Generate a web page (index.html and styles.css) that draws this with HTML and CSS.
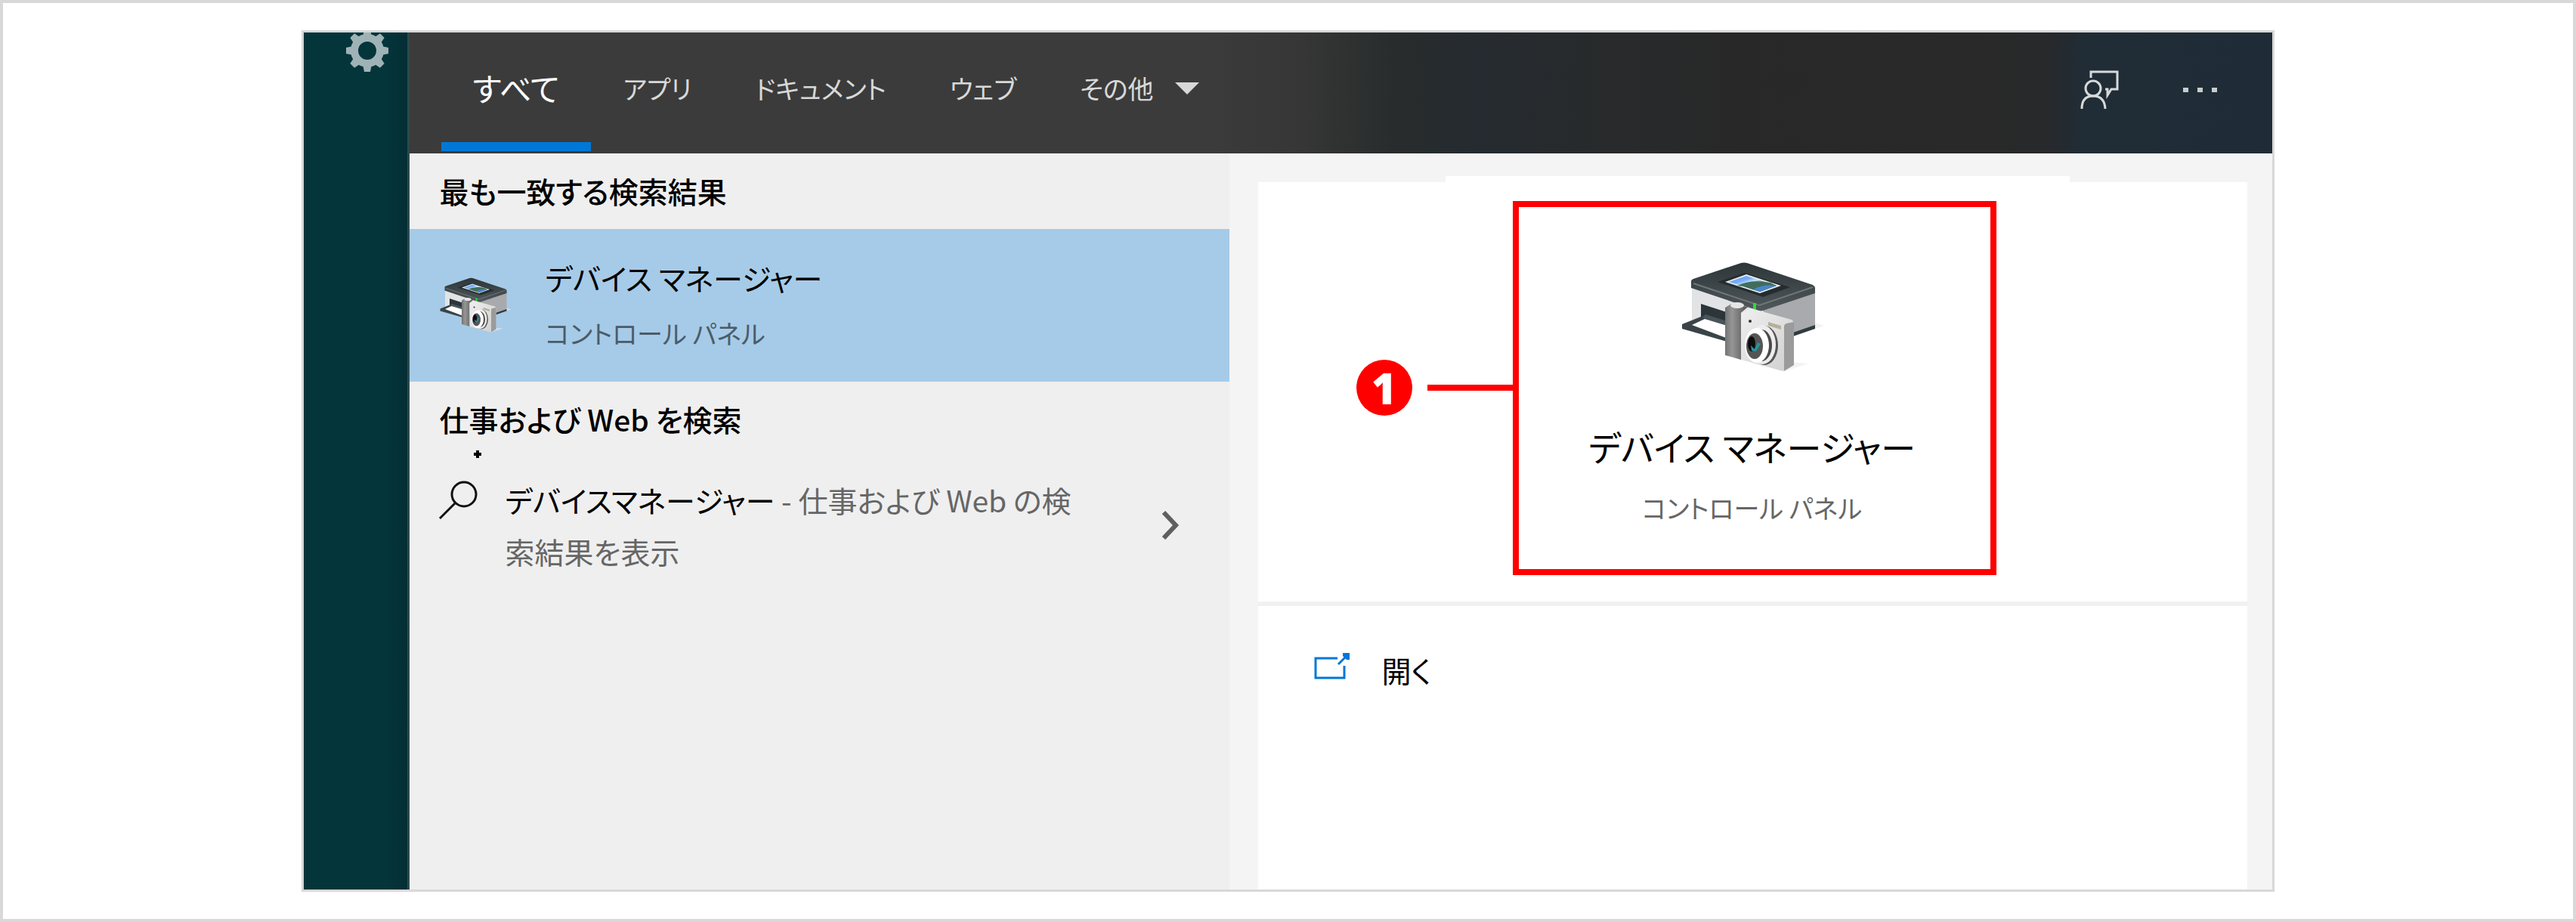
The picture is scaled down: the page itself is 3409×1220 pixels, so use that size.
FILE: index.html
```html
<!DOCTYPE html>
<html lang="ja">
<head>
<meta charset="utf-8">
<meta name="viewport" content="width=device-width, initial-scale=1">
<title>デバイス マネージャー - 検索</title>
<link rel="stylesheet" href="styles.css">
</head>
<body>
<svg class="defs" aria-hidden="true">
  <defs>
    <linearGradient id="lid" x1="0" y1="0" x2="0" y2="1"><stop offset="0" stop-color="#2c3538"/><stop offset="1" stop-color="#50585b"/></linearGradient>
    <linearGradient id="grip" x1="0" y1="0" x2="1" y2="0"><stop offset="0" stop-color="#737373"/><stop offset=".3" stop-color="#969696"/><stop offset=".7" stop-color="#707070"/><stop offset="1" stop-color="#4e4e4e"/></linearGradient>
    <linearGradient id="camera" x1="0" y1="0" x2="1" y2="1"><stop offset="0" stop-color="#efefef"/><stop offset="1" stop-color="#cfcfcf"/></linearGradient>
    <linearGradient id="photo" x1="0" y1="0" x2="1" y2="1"><stop offset="0" stop-color="#5b97f2"/><stop offset=".3" stop-color="#78aef8"/><stop offset=".42" stop-color="#c6e2f6"/><stop offset=".6" stop-color="#3d6b57"/><stop offset=".78" stop-color="#3b6f8c"/><stop offset="1" stop-color="#4c8ee0"/></linearGradient>
    <symbol id="printer" viewBox="24 27 188 148">
      <path d="M172 112L200 108L214 112L172 125Z M165 160L192 162L158 173Z" fill="#e9e9e9" opacity=".6"/>
      <path d="M38 56L130 88V135L38 104Z" fill="#e2e3e5"/>
      <path d="M130 88L201 64V113L150 131Z" fill="#a9aaad"/>
      <path d="M172 121L201 111V116L172 126Z" fill="#323c40"/>
      <path d="M50 83L90 96V116L50 102Z" fill="#2c3539"/>
      <path d="M56 97L88 107V116L50 102Z" fill="#48535a"/>
      <path d="M25 110L50 100L88 116V134L25 116Z" fill="#3a4448"/>
      <path d="M38 111L55 103L88 113V130Z" fill="#fff"/>
      <path d="M37 53Q37 51 40 50L103 29Q107 28 111 29L198 58Q201 60 201 62V69L132 92Q129 93 126 92L37 62Z" fill="url(#lid)"/>
      <path d="M40 56L127 85L198 61" fill="none" stroke="#6e7679" stroke-width="2"/>
      <path d="M72 54L108 42L168 61L132 74Z" fill="#252c2f"/>
      <path d="M82 54L110 44L156 59L128 69Z" fill="#e8edf0"/>
      <path d="M87 54L110 46L150 59L128 67Z" fill="url(#photo)"/>
      <path d="M98 59Q116 50 142 55L150 59L128 67L106 60Z" fill="#416d5c"/>
      <path d="M119 64Q132 57 150 59L128 67Z" fill="#4a86c8"/>
      <path d="M119 82H123V92H119Z" fill="#2bdc36"/>
      <path d="M82 88L90 83L112 87L103 95V157L82 151Z" fill="url(#grip)"/>
      <ellipse cx="98" cy="85" rx="9" ry="4" fill="#e6e6e6"/>
      <path d="M103 95L116 89L170 104Q173 106 173 109V164L158 172L103 157Z" fill="url(#camera)"/>
      <path d="M160 113Q160 110 163 109L173 107V164L160 172Z" fill="#9b9b9b"/>
      <path d="M139 107L156 112V117L139 112Z" fill="#b5b099"/>
      <circle cx="115" cy="106" r="2" fill="#333"/>
      <ellipse cx="134" cy="138" rx="18" ry="26" fill="#555"/>
      <ellipse cx="131" cy="137" rx="18" ry="26" fill="#ededed"/>
      <ellipse cx="130" cy="138" rx="14" ry="21" fill="#4a4a4a"/>
      <ellipse cx="124" cy="138" rx="16" ry="23" fill="#fff"/>
      <ellipse cx="121" cy="139" rx="11" ry="17" fill="#555"/>
      <ellipse cx="117" cy="136" rx="5" ry="10" fill="#0c0c0c"/>
      <path d="M116 138L121 143L125 134L129 136L123 146L117 145Z" fill="#24949f"/>
    </symbol>
  </defs>
</svg>
<div class="page">
  <div class="window">
    <aside class="rail">
      <button class="icon-button" aria-label="設定">
        <svg class="gear" viewBox="-28 -28 56 56" aria-hidden="true">
          <g fill="#9fb3b6">
            <path d="M-4-28H4L6-18H-6Z"/><path d="M-4-28H4L6-18H-6Z" transform="rotate(45)"/><path d="M-4-28H4L6-18H-6Z" transform="rotate(90)"/><path d="M-4-28H4L6-18H-6Z" transform="rotate(135)"/><path d="M-4-28H4L6-18H-6Z" transform="rotate(180)"/><path d="M-4-28H4L6-18H-6Z" transform="rotate(225)"/><path d="M-4-28H4L6-18H-6Z" transform="rotate(270)"/><path d="M-4-28H4L6-18H-6Z" transform="rotate(315)"/>
          </g>
          <circle r="17" fill="none" stroke="#9fb3b6" stroke-width="10"/>
        </svg>
      </button>
    </aside>
    <main class="search">
      <header class="bar">
        <nav class="tabs">
          <button class="tab tab-active">すべて</button>
          <button class="tab">アプリ</button>
          <button class="tab">ドキュメント</button>
          <button class="tab">ウェブ</button>
          <button class="tab">その他<svg class="caret" viewBox="0 0 32 16" aria-hidden="true"><path d="M0 0H32L16 16Z" fill="currentColor"/></svg></button>
        </nav>
        <div class="tools">
          <button class="icon-button" aria-label="フィードバック">
            <svg class="feedback" viewBox="0 0 52 52" fill="none" stroke="#d6d9da" stroke-width="3" aria-hidden="true">
              <path d="M14 10V2H49V25H41L36 33V25H33"/><ellipse cx="17" cy="24" rx="10" ry="10"/><path d="M2 51Q2 34 17 34T33 51"/>
            </svg>
          </button>
          <button class="icon-button" aria-label="オプション">
            <svg class="dots" viewBox="0 0 46 6" fill="#c8cccd" aria-hidden="true"><path d="M0 0H7V6H0ZM19 0H26V6H19ZM38 0H45V6H38Z"/></svg>
          </button>
        </div>
      </header>
      <div class="body">
        <section class="results">
          <h2 class="heading">最も一致する検索結果</h2>
          <a class="best" href="#device">
            <svg class="best-icon" aria-hidden="true"><use href="#printer"/></svg>
            <span class="best-text">
              <span class="best-title">デバイス マネージャー</span>
              <span class="best-sub">コントロール パネル</span>
            </span>
          </a>
          <h2 class="heading">仕事および Web を検索<svg class="mark" viewBox="0 0 10 10" aria-hidden="true"><path d="M5 0V10M0 5H10" stroke="#000" stroke-width="4"/></svg></h2>
          <a class="web" href="#web">
            <svg class="lens" viewBox="0 0 52 52" fill="none" stroke="#111" stroke-width="3" aria-hidden="true"><circle cx="34" cy="18" r="16"/><path d="M22 30L2 50"/></svg>
            <span class="web-text"><span class="query">デバイスマネージャー</span> - 仕事および Web の検索結果を表示</span>
            <svg class="chevron" viewBox="0 0 24 38" fill="none" stroke="#5f5f5f" stroke-width="6" aria-hidden="true"><path d="M3 2L19 19L3 36"/></svg>
          </a>
        </section>
        <section class="preview">
          <div class="hero">
            <div class="target" id="device">
              <span class="callout"><span class="badge">1</span><span class="leader"></span></span>
              <svg class="hero-icon" aria-hidden="true"><use href="#printer"/></svg>
              <h1 class="hero-title">デバイス マネージャー</h1>
              <p class="hero-sub">コントロール パネル</p>
            </div>
          </div>
          <div class="actions">
            <a class="action" href="#open">
              <svg class="open-icon" viewBox="0 0 48 36" fill="none" stroke="#0078d7" stroke-width="3" aria-hidden="true"><path d="M31 8H2V34H40V18M32 16L44 4"/><path d="M38 1H47V10H43L38 5Z" fill="#0078d7" stroke="none"/></svg>
              開く
            </a>
          </div>
        </section>
      </div>
    </main>
  </div>
</div>
</body>
</html>
```
FILE: styles.css
```css
* {
  box-sizing: border-box;
}

body {
  margin: 0;
  background: #fff;
  color: #000;
  font-family: "Noto Sans CJK JP", sans-serif;
  font-size: 39px;
  line-height: 60px;
  font-feature-settings: "palt";
}

h1, h2, p {
  margin: 0;
  font-weight: 400;
}

a {
  color: inherit;
  text-decoration: none;
}

button {
  border: 0;
  padding: 0;
  background: none;
  color: inherit;
  font: inherit;
  font-feature-settings: inherit;
}

svg {
  display: block;
  flex: none;
}

.defs {
  position: absolute;
  width: 0;
  height: 0;
}

.page {
  display: flex;
  justify-content: center;
  min-height: 100vh;
  padding: 36px 0;
  border: 4px solid #d8d8d8;
}

.window {
  display: flex;
  width: 76.8%;
  border: 3px solid #d8d8d8;
}

.rail {
  display: flex;
  flex: none;
  align-items: flex-start;
  justify-content: center;
  width: 140px;
  padding-left: 32px;
  overflow: hidden;
  border-right: 3px solid #2b494d;
  background: linear-gradient(90deg, #04353b 80%, #032e34);
}

.gear {
  width: 56px;
  height: 56px;
  margin-top: -4px;
}

.search {
  display: flex;
  flex: 1;
  flex-direction: column;
  min-width: 0;
}

.bar {
  display: flex;
  justify-content: space-between;
  height: 160px;
  padding: 0 72px 0 42px;
  background: linear-gradient(90deg, #3b3b3b 43%, #353635 48%, #282c2c 53%, #252b30 57%, #282a2b 65%, #282828 71%, #282928 85%, #27292c 88%, #202d36 90%, #1f2c38);
}

.tabs {
  display: flex;
  color: #d8d8d8;
}

.tab {
  display: flex;
  align-items: center;
  gap: 28px;
  padding: 0 42px 12px;
  font-size: 34px;
}

.tab-active {
  margin-bottom: 3px;
  padding-bottom: 0;
  border-bottom: 12px solid #0078d7;
  color: #fff;
  font-size: 42px;
}

.caret {
  width: 32px;
  height: 16px;
}

.tools {
  display: flex;
  align-items: center;
  gap: 84px;
  padding-bottom: 9px;
}

.feedback {
  width: 52px;
  height: 52px;
}

.dots {
  width: 46px;
  height: 6px;
}

.body {
  display: grid;
  flex: 1;
  grid-template-columns: 44% 1fr;
}

.results {
  background: #efefef;
}

.heading {
  position: relative;
  padding: 19px 40px 21px;
  font-size: 39px;
  font-weight: 500;
}

.mark {
  position: absolute;
  top: 91px;
  left: 85px;
  width: 10px;
  height: 10px;
}

.best {
  display: flex;
  align-items: center;
  gap: 46px;
  height: 202px;
  padding: 0 40px;
  background: #a6cbe8;
}

.best-icon {
  width: 94px;
  height: 78px;
}

.best-text {
  display: grid;
  gap: 14px;
}

.best-sub {
  color: #4a5c69;
  font-size: 34px;
}

.web {
  display: flex;
  align-items: center;
  padding: 22px 66px 18px 38px;
}

.lens {
  align-self: flex-start;
  width: 52px;
  height: 52px;
  margin-top: 9px;
}

.web-text {
  max-width: 770px;
  margin: 0 auto 0 37px;
  color: #666;
  line-height: 68px;
}

.query {
  color: #000;
}

.chevron {
  width: 24px;
  height: 38px;
}

.preview {
  display: flex;
  flex-direction: column;
  padding: 38px 33px 0 38px;
  background: #f4f4f4;
}

.hero {
  position: relative;
  display: flex;
  justify-content: center;
  padding: 25px 0 35px 4px;
  border-bottom: 6px solid #f1f1f1;
  background: #fff;
}

.hero::before {
  position: absolute;
  top: -8px;
  left: 19%;
  width: 63%;
  height: 8px;
  background: #fff;
  content: "";
}

.target {
  position: relative;
  display: flex;
  flex-direction: column;
  align-items: center;
  width: 640px;
  height: 495px;
  padding: 72px 6px 0 0;
  border: 8px solid #f00;
}

.callout {
  position: absolute;
  top: 202px;
  right: 100%;
  display: flex;
  align-items: center;
  gap: 20px;
}

.badge {
  width: 74px;
  height: 74px;
  border-radius: 50%;
  background: #f00;
  color: #fff;
  font: 800 56px/74px "Open Sans", sans-serif;
  text-align: center;
}

.leader {
  width: 121px;
  height: 8px;
  background: #f00;
}

.hero-icon {
  width: 188px;
  height: 148px;
}

.hero-title {
  margin-top: 56px;
  font-size: 46px;
  line-height: 80px;
}

.hero-sub {
  margin-top: 12px;
  color: #666;
  font-size: 34px;
}

.actions {
  flex: 1;
  padding: 54px 74px;
  background: #fff;
}

.action {
  display: flex;
  align-items: center;
  gap: 42px;
}

.open-icon {
  width: 48px;
  height: 36px;
  margin-bottom: 10px;
}
```
